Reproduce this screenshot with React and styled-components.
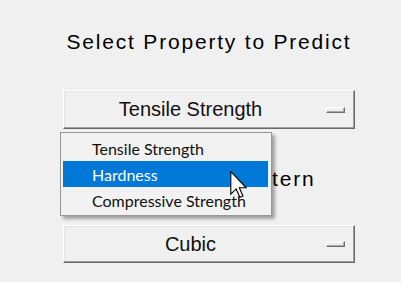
import React from 'react';
import styled, { createGlobalStyle } from 'styled-components';

const GlobalStyle = createGlobalStyle`
  html, body {
    margin: 0;
    padding: 0;
    background: #f0f0f0;
  }
`;

const Screen = styled.div`
  position: relative;
  width: 401px;
  height: 282px;
  box-sizing: border-box;
  padding: 30px 46px 0 63px;
  display: flex;
  flex-direction: column;
  background: #f0f0f0;
  overflow: hidden;
  font-family: 'Liberation Sans', Arial, sans-serif;
  color: #000;
`;

const Heading = styled.h2`
  margin: ${(p) => p.$top || 0}px 0 0;
  font-size: 21px;
  font-weight: normal;
  line-height: 23px;
  letter-spacing: 1.8px;
  text-align: center;
  white-space: nowrap;
  color: #000;
`;

const PopupWrap = styled.div`
  position: relative;
  margin-top: ${(p) => p.$top || 0}px;
`;

const Popup = styled.button`
  width: 100%;
  height: ${(p) => p.$height}px;
  box-sizing: border-box;
  display: flex;
  align-items: center;
  gap: 10px;
  padding: 0 9px 0 1px;
  background: #f0f0f0;
  border: 1px solid;
  border-color: #ffffff #696969 #696969 #ffffff;
  box-shadow: inset -1px -1px 0 #a0a0a0, inset 1px 1px 0 #e3e3e3;
  font-family: 'Liberation Sans', Arial, sans-serif;
  font-size: 20px;
  color: #111;
  cursor: default;
`;

const PopupLabel = styled.span`
  flex: 1;
  text-align: center;
  white-space: nowrap;
`;

const Grip = styled.span`
  width: 19px;
  height: 6px;
  box-sizing: border-box;
  background: #f0f0f0;
  border: 1px solid;
  border-color: #ffffff #6e6e6e #6e6e6e #ffffff;
  box-shadow: inset -1px -1px 0 #a8a8a8;
`;

const Menu = styled.ul`
  position: absolute;
  top: 42px;
  left: -3px;
  width: 212px;
  box-sizing: border-box;
  margin: 0;
  padding: 2px;
  list-style: none;
  background: #f2f2f2;
  border: 1px solid #979797;
  box-shadow: 3px 3px 3px rgba(0, 0, 0, 0.32);
  z-index: 2;
`;

const MenuItem = styled.li`
  height: 26px;
  display: flex;
  align-items: center;
  padding-left: 29px;
  margin-right: 1px;
  font-family: Lato, 'Noto Sans', sans-serif;
  font-size: 16px;
  white-space: nowrap;
  color: ${(p) => (p.$active ? '#ffffff' : '#111')};
  background: ${(p) => (p.$active ? '#0078d7' : 'transparent')};
`;

const Pointer = styled.svg`
  position: absolute;
  left: 230px;
  top: 171px;
  z-index: 3;
`;

const options = ['Tensile Strength', 'Hardness', 'Compressive Strength'];

const Cursor = () => (
  <Pointer width="17" height="28" viewBox="0 0 12 20">
    <path
      d="M0.5 0.5 L0.5 16.5 L4.3 12.8 L7 18.8 L9.2 17.8 L6.6 12 L11.5 12 Z"
      fill="#ffffff"
      stroke="#000000"
      strokeWidth="0.8"
      strokeLinejoin="miter"
    />
  </Pointer>
);

const App = () => {
  return (
    <>
      <GlobalStyle />
      <Screen>
        <Heading>Select Property to Predict</Heading>
        <PopupWrap $top={37}>
          <Popup $height={39}>
            <PopupLabel>Tensile Strength</PopupLabel>
            <Grip />
          </Popup>
          <Menu>
            {options.map((opt) => (
              <MenuItem key={opt} $active={opt === 'Hardness'}>
                {opt}
              </MenuItem>
            ))}
          </Menu>
        </PopupWrap>
        <Heading $top={38}>Select Infill Pattern</Heading>
        <PopupWrap $top={35}>
          <Popup $height={38}>
            <PopupLabel>Cubic</PopupLabel>
            <Grip />
          </Popup>
        </PopupWrap>
        <Cursor />
      </Screen>
    </>
  );
};

export default App;
